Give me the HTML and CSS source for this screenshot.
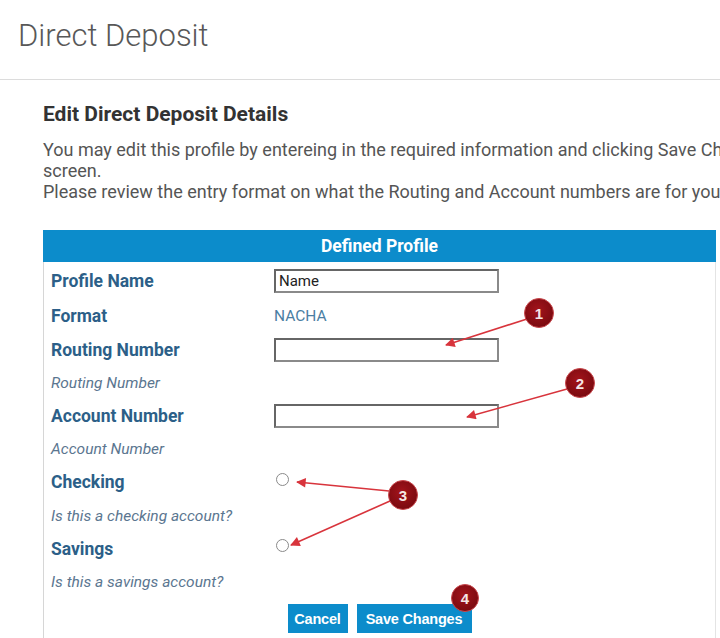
FILE: index.html
```html
<!DOCTYPE html>
<html lang="en">
<head>
<meta charset="utf-8">
<title>Direct Deposit</title>
<link rel="stylesheet" href="styles.css">
</head>
<body>
<div class="page">
  <header class="topbar">
    <h1 class="page-title">Direct Deposit</h1>
  </header>
  <main class="content">
    <h2 class="section-title">Edit Direct Deposit Details</h2>
    <p class="intro">You may edit this profile by entereing in the required information and clicking Save Changes at the bottom of the<br>screen.<br>Please review the entry format on what the Routing and Account numbers are for your bank.</p>

    <div class="profile">
      <div class="profile-head">Defined Profile</div>
      <div class="profile-body">
        <div class="row tall"><span class="label">Profile Name</span><span class="value"><input class="field" type="text" value="Name"></span></div>
        <div class="row tall"><span class="label">Format</span><span class="value nacha">NACHA</span></div>
        <div class="row"><span class="label">Routing Number</span><span class="value"><input class="field" type="text"></span></div>
        <div class="row"><span class="hint">Routing Number</span></div>
        <div class="row"><span class="label">Account Number</span><span class="value"><input class="field" type="text"></span></div>
        <div class="row"><span class="hint">Account Number</span></div>
        <div class="row mid"><span class="label">Checking</span><span class="value"><input class="radio" type="radio" name="acct"></span></div>
        <div class="row"><span class="hint">Is this a checking account?</span></div>
        <div class="row"><span class="label">Savings</span><span class="value"><input class="radio" type="radio" name="acct"></span></div>
        <div class="row"><span class="hint">Is this a savings account?</span></div>
        <div class="actions">
          <button class="btn btn-cancel" type="button">Cancel</button>
          <button class="btn btn-save" type="button">Save Changes</button>
        </div>
      </div>
    </div>
  </main>

  <svg class="annotations" width="720" height="638" viewBox="0 0 720 638" xmlns="http://www.w3.org/2000/svg">
    <defs>
      <marker id="head" viewBox="0 0 10 10" refX="9" refY="5" markerWidth="7" markerHeight="6" orient="auto-start-reverse">
        <path d="M0 0 L10 5 L0 10 z" fill="#d8343c"/>
      </marker>
      <radialGradient id="dot" cx="45%" cy="40%" r="60%">
        <stop offset="0%" stop-color="#a3141b"/>
        <stop offset="100%" stop-color="#7a0a10"/>
      </radialGradient>
    </defs>
    <g stroke="#d8343c" stroke-width="1.6" fill="none" marker-end="url(#head)">
      <line x1="527" y1="319" x2="446" y2="345"/>
      <line x1="567" y1="389" x2="467" y2="417"/>
      <line x1="389" y1="491" x2="297" y2="482"/>
      <line x1="390" y1="501" x2="291" y2="545"/>
    </g>
    <g fill="url(#dot)" stroke="#c9484d" stroke-width="1">
      <circle cx="539" cy="313" r="14.5"/>
      <circle cx="580" cy="383" r="14.5"/>
      <circle cx="403" cy="495" r="14.5"/>
      <circle cx="465" cy="598" r="13.5"/>
    </g>
    <g class="num" fill="#f4e6e6" text-anchor="middle">
      <text x="539" y="318.5">1</text>
      <text x="580" y="388.5">2</text>
      <text x="403" y="500.5">3</text>
      <text x="465" y="603.5">4</text>
    </g>
  </svg>
</div>
</body>
</html>
```

FILE: styles.css
```css
html, body {
  margin: 0;
  padding: 0;
  background: #fff;
  overflow: hidden;
}

body {
  font-family: Roboto, "Liberation Sans", Arial, sans-serif;
  color: #555;
}

.page {
  position: relative;
  width: 720px;
  height: 638px;
  overflow: hidden;
}

.topbar {
  height: 80px;
  box-sizing: border-box;
  border-bottom: 1px solid #dcdcdc;
  padding: 17px 0 0 18px;
}

.page-title {
  margin: 0;
  font-size: 31px;
  line-height: 38px;
  font-weight: 300;
  color: #585858;
}

.content {
  padding-left: 43px;
}

.section-title {
  margin: 22px 0 0;
  font-size: 21px;
  line-height: 24px;
  font-weight: 700;
  color: #333;
}

.intro {
  margin: 13px 0 0;
  font-size: 18px;
  line-height: 21px;
  color: #555;
  white-space: nowrap;
}

.profile {
  margin-top: 28px;
  width: 673px;
  box-sizing: border-box;
  border-left: 1px solid #d6d6d6;
  border-right: 1px solid #e4e4e4;
  height: 420px;
}

.profile-head {
  height: 32px;
  margin: 0 -1px;
  background: #0c8ccb;
  color: #fff;
  font-weight: 700;
  font-size: 17.5px;
  line-height: 32px;
  text-align: center;
}

.profile-body {
  padding-top: 1px;
}

.row {
  display: grid;
  grid-template-columns: 230px 1fr;
  align-items: center;
  height: 33px;
}

.row.tall {
  height: 35px;
}

.row.mid {
  height: 34px;
}

.label {
  padding-left: 7px;
  font-size: 17.5px;
  font-weight: 700;
  color: #2c5f88;
}

.hint {
  padding-left: 7px;
  font-size: 15.5px;
  font-style: italic;
  color: #5b7690;
  grid-column: 1 / 3;
}

.value {
  display: flex;
  align-items: center;
}

.nacha {
  font-size: 15.5px;
  color: #4b7ea3;
}

.field {
  box-sizing: border-box;
  width: 225px;
  height: 24px;
  margin: 0;
  padding: 0 3px;
  border: 2px solid #8a8a8a;
  border-top-color: #666;
  border-left-color: #666;
  background: #fff;
  font-family: Roboto, "Liberation Sans", Arial, sans-serif;
  font-size: 15px;
  color: #222;
}

.radio {
  appearance: none;
  -webkit-appearance: none;
  box-sizing: border-box;
  width: 13px;
  height: 13px;
  margin: 0 0 0 2px;
  border: 1px solid #8a8a8a;
  border-radius: 50%;
  background: #fff;
  transform: translateY(-3px);
}

.actions {
  display: flex;
  justify-content: center;
  gap: 9px;
  margin-top: 6px;
}

.btn {
  height: 29px;
  border: 0;
  padding: 0;
  background: #0c8ccb;
  color: #fff;
  font-family: "Liberation Sans", Arial, sans-serif;
  font-size: 14.5px;
  font-weight: 700;
  letter-spacing: -0.2px;
}

.btn-cancel {
  width: 60px;
}

.btn-save {
  width: 115px;
}

.annotations {
  position: absolute;
  left: 0;
  top: 0;
  pointer-events: none;
}

.num text {
  font-family: "Liberation Sans", Arial, sans-serif;
  font-size: 15px;
  font-weight: 700;
}
```
